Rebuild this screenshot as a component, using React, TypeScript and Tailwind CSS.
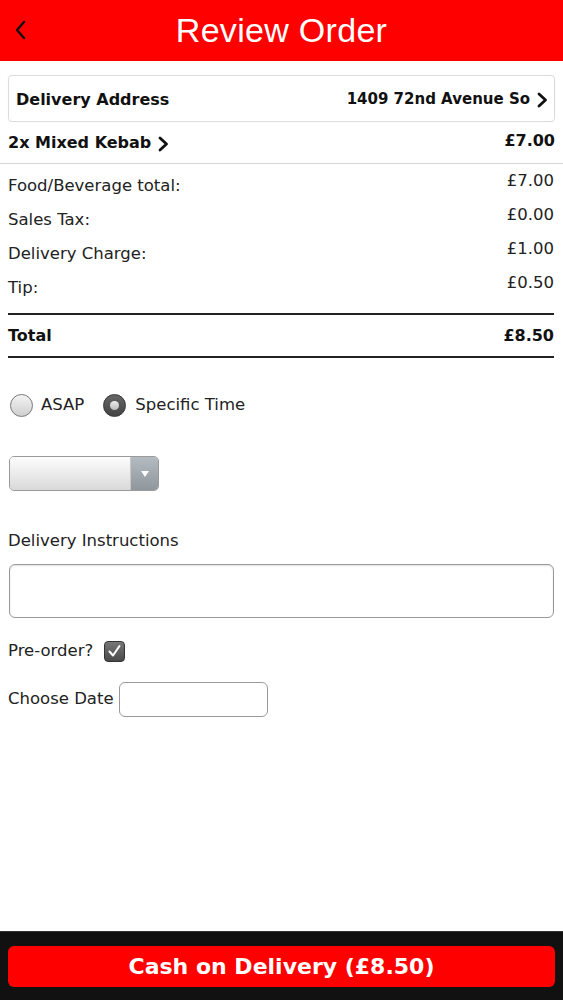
import React from "react";

const V = { fontFamily: '"DejaVu Sans", Verdana, sans-serif' };

function Row({ label, value }: { label: string; value: string }) {
  return (
    <div className="flex justify-between h-[34px] text-[16.5px] text-[#222]">
      <span className="pt-[9px]">{label}</span>
      <span className="pt-[4px]">{value}</span>
    </div>
  );
}

function Chevron({ className = "" }: { className?: string }) {
  return (
    <svg width="11" height="16" viewBox="0 0 11 16" className={className}>
      <path d="M2 2 L8.5 8 L2 14" fill="none" stroke="#111" strokeWidth="2.8" strokeLinecap="round" strokeLinejoin="round" />
    </svg>
  );
}

export default function App() {
  return (
    <div className="w-[563px] h-[1000px] bg-white flex flex-col overflow-hidden relative" style={V}>
      <div className="h-[61px] bg-[#ff0000] relative flex items-center justify-center shrink-0">
        <svg width="14" height="22" viewBox="0 0 14 22" className="absolute left-[14px] top-[19px]">
          <path d="M10 3 L3 11 L10 19" fill="none" stroke="#111" strokeWidth="2.4" strokeLinecap="round" strokeLinejoin="round" />
        </svg>
        <span className="text-white text-[34px] font-light tracking-[0.3px]" style={{ fontFamily: '"Liberation Sans", Arial, sans-serif' }}>
          Review Order
        </span>
      </div>

      <div className="px-[8px] pt-[14px] flex-1">
        <div className="h-[47px] border border-[#dcdcdc] rounded-[4px] flex items-center justify-between pl-[7px] pr-[6px] shadow-[0_0_2px_rgba(0,0,0,0.06)]">
          <span className="font-bold text-[16px] text-[#111] pt-[2px]">Delivery Address</span>
          <span className="flex items-center gap-[7px] font-bold text-[15px] text-[#111] pt-[2px]">
            1409 72nd Avenue So <Chevron />
          </span>
        </div>

        <div className="flex justify-between h-[42px]">
          <span className="flex items-center gap-[7px] font-bold text-[16px] text-[#111]">
            2x Mixed Kebab <Chevron className="mt-[2px]" />
          </span>
          <span className="font-bold text-[16px] text-[#111] pt-[7px]">£7.00</span>
        </div>
      </div>

      <div className="absolute left-0 right-0 top-[163px] h-px bg-[#d6d6d6]" />

      <div className="absolute left-[8px] right-[9px] top-[165px]">
        <Row label="Food/Beverage total:" value="£7.00" />
        <Row label="Sales Tax:" value="£0.00" />
        <Row label="Delivery Charge:" value="£1.00" />
        <Row label="Tip:" value="£0.50" />
      </div>

      <div className="absolute left-[8px] right-[9px] top-[313px]">
        <div className="h-[2px] bg-[#222]" />
        <div className="flex justify-between items-center h-[41px] font-bold text-[16px] text-[#111]">
          <span>Total</span>
          <span>£8.50</span>
        </div>
        <div className="h-[2px] bg-[#222]" />

        <div className="flex items-center mt-[34px] h-[26px] text-[16.5px] text-[#222]">
          <span className="w-[23px] h-[23px] rounded-full border border-[#777] bg-gradient-to-b from-[#f4f4f4] to-[#cfcfcf] ml-[2px]" />
          <span className="ml-[8px]">ASAP</span>
          <span className="ml-[19px] w-[23px] h-[23px] rounded-full border border-[#333] bg-gradient-to-b from-[#666] to-[#444] flex items-center justify-center">
            <span className="w-[9px] h-[9px] rounded-full bg-gradient-to-b from-[#eee] to-[#bbb]" />
          </span>
          <span className="ml-[9px]">Specific Time</span>
        </div>

        <div className="mt-[38px] ml-[1px] w-[150px] h-[35px] rounded-[5px] border border-[#9a9a9a] flex overflow-hidden">
          <div className="flex-1 bg-gradient-to-b from-[#fdfdfd] to-[#d9d9d9]" />
          <div className="w-[28px] bg-gradient-to-b from-[#b4bcc2] to-[#8f979d] border-l border-[#c8c8c8] flex items-center justify-center">
            <svg width="10" height="8" viewBox="0 0 10 8">
              <path d="M1 1 L9 1 L5 7 Z" fill="#fff" />
            </svg>
          </div>
        </div>

        <div className="mt-[40px] text-[16.5px] text-[#222] leading-[20px]">Delivery Instructions</div>
        <div className="mt-[13px] ml-[1px] h-[54px] rounded-[6px] border border-[#999] shadow-[inset_0_1px_2px_rgba(0,0,0,0.12)]" />

        <div className="flex items-center mt-[22px] h-[22px] text-[16.5px] text-[#222]">
          <span>Pre-order?</span>
          <span className="ml-[11px] w-[21px] h-[21px] rounded-[4px] border border-[#333] bg-gradient-to-b from-[#777] to-[#4a4a4a] flex items-center justify-center">
            <svg width="15" height="14" viewBox="0 0 15 14">
              <path d="M2.5 7.5 L6 11.5 L12.5 2" fill="none" stroke="#fff" strokeWidth="2" strokeLinecap="round" strokeLinejoin="round" />
            </svg>
          </span>
        </div>

        <div className="flex items-center mt-[20px] h-[35px] text-[16.5px] text-[#222]">
          <span>Choose Date</span>
          <span className="ml-[5px] w-[149px] h-[35px] rounded-[6px] border border-[#999]" />
        </div>
      </div>

      <div className="h-[69px] bg-[#111] border-t border-[#333] px-[8px] pt-[14px] shrink-0">
        <div className="h-[41px] rounded-[6px] bg-[#ff0000] flex items-center justify-center text-white font-bold text-[22px]">
          Cash on Delivery (£8.50)
        </div>
      </div>
    </div>
  );
}
